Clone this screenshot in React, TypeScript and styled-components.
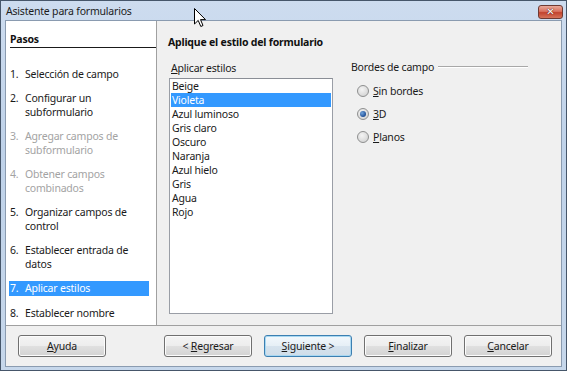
import React from "react";
import styled, { createGlobalStyle } from "styled-components";

const Global = createGlobalStyle`
  html, body { margin: 0; padding: 0; background: #c4d6ea; }
  body { font-family: "Noto Sans", "Open Sans", sans-serif; font-size: 10.5px; letter-spacing: -0.2px; color: #1a1a1a; }
  * { box-sizing: border-box; }
`;

const Window = styled.div`
  position: relative;
  width: 567px;
  height: 371px;
  border: 1px solid #46566a;
  background: linear-gradient(180deg, #cddcef 0%, #bfd2e9 40%, #c6d7eb 100%);
  padding: 0 4px 3px 4px;
  display: flex;
  flex-direction: column;
`;

const TitleBar = styled.div`
  height: 19px;
  display: flex;
  align-items: center;
  justify-content: space-between;
  padding-left: 1px;
`;

const TitleText = styled.span`
  font-size: 10.5px;
  color: #1b1b1b;
  line-height: 20px;
  padding-top: 1px;
`;

const CloseButton = styled.div`
  width: 25px;
  height: 14px;
  margin-top: 3px;
  margin-right: -1px;
  border: 1px solid #6e3a33;
  border-radius: 3px;
  background: linear-gradient(180deg, #e9a99b 0%, #d8715f 45%, #c2432e 55%, #d6735a 100%);
  display: flex;
  align-items: center;
  justify-content: center;
  color: #fff;
  font-family: "DejaVu Sans", sans-serif;
  font-weight: bold;
  font-size: 10px;
  line-height: 1;
  letter-spacing: 0;
  text-shadow: 0 0 1px #5a1c12, 0 0 1px #5a1c12;
`;

const Client = styled.div`
  flex: 1;
  background: #f0f0f0;
  border: 1px solid #8a9bb0;
  display: flex;
  flex-direction: column;
`;

const Main = styled.div`
  height: 304px;
  display: flex;
`;

const StepsPanel = styled.div`
  width: 151px;
  background: #fff;
  border-right: 1px solid #a0a0a0;
  padding: 12px 0 0 4px;
  display: flex;
  flex-direction: column;
`;

const StepsHeader = styled.div`
  font-weight: bold;
  line-height: 13px;
  border-bottom: 1px solid #1a1a1a;
  padding-bottom: 1px;
  color: #111;
`;

const StepList = styled.div`
  margin: 19px 7px 0 -1px;
  display: flex;
  flex-direction: column;
  gap: 10px;
`;

const Step = styled.div<{ $state?: "active" | "disabled" }>`
  display: grid;
  grid-template-columns: 15px 1fr;
  padding-left: 1px;
  line-height: 14px;
  color: ${(p) => (p.$state === "disabled" ? "#a3a3a3" : p.$state === "active" ? "#fff" : "#1a1a1a")};
  background: ${(p) => (p.$state === "active" ? "#3399ff" : "transparent")};
  height: ${(p) => (p.$state === "active" ? "15px" : "auto")};
`;

const Content = styled.div`
  flex: 1;
  padding: 14px 0 0 11px;
  display: flex;
  flex-direction: column;
`;

const PageTitle = styled.div`
  font-weight: bold;
  line-height: 14px;
  color: #111;
`;

const Columns = styled.div`
  display: flex;
  margin-top: 12px;
`;

const ListColumn = styled.div`
  width: 164px;
  margin-left: 1px;
  display: flex;
  flex-direction: column;
`;

const FieldLabel = styled.div`
  line-height: 14px;
  padding-left: 2px;
`;

const U = styled.span`
  text-decoration: underline;
`;

const ListBox = styled.div`
  margin-top: 3px;
  height: 236px;
  background: #fff;
  border: 1px solid #9a9ea6;
  border-top-color: #8a8e96;
  padding: 0 1px;
`;

const ListItem = styled.div<{ $selected?: boolean }>`
  line-height: 14px;
  padding-left: 1px;
  color: ${(p) => (p.$selected ? "#fff" : "#1a1a1a")};
  background: ${(p) => (p.$selected ? "#3399ff" : "transparent")};
`;

const BorderColumn = styled.div`
  margin-left: 18px;
  width: 177px;
  display: flex;
  flex-direction: column;
`;

const GroupHeader = styled.div`
  display: flex;
  align-items: center;
  gap: 4px;
  line-height: 14px;
  margin-top: -1px;
`;

const GroupLine = styled.div`
  flex: 1;
  height: 1px;
  background: #a8a8a8;
  border-bottom: 1px solid #fff;
  box-sizing: content-box;
`;

const RadioList = styled.div`
  display: flex;
  flex-direction: column;
  gap: 9px;
  margin-top: 10px;
  padding-left: 6px;
`;

const RadioRow = styled.label`
  display: flex;
  align-items: center;
  gap: 4px;
  line-height: 14px;
`;

const RadioCircle = styled.span<{ $checked?: boolean }>`
  width: 12px;
  height: 12px;
  border-radius: 50%;
  border: 1px solid #8e8f8f;
  background: radial-gradient(circle at 40% 35%, #f4f4f4 0%, #dcdcdc 60%, #cfcfcf 100%);
  display: flex;
  align-items: center;
  justify-content: center;
  &::after {
    content: "";
    display: ${(p) => (p.$checked ? "block" : "none")};
    width: 6px;
    height: 6px;
    border-radius: 50%;
    background: radial-gradient(circle at 35% 35%, #6fa3dc 0%, #1f4f96 70%, #163a70 100%);
  }
`;

const Footer = styled.div`
  flex: 1;
  border-top: 1px solid #a0a0a0;
  display: flex;
  align-items: flex-start;
  padding: 9px 9px 0 12px;
`;

const Spacer = styled.div`
  flex: 1;
`;

const ButtonGroup = styled.div`
  display: flex;
  gap: 12px;
`;

const Button = styled.button<{ $focused?: boolean }>`
  width: 88px;
  height: 22px;
  font-family: inherit;
  font-size: 10.5px;
  letter-spacing: -0.2px;
  color: #1a1a1a;
  border-radius: 3px;
  border: 1px solid ${(p) => (p.$focused ? "#3c7fb1" : "#707070")};
  background: ${(p) =>
    p.$focused
      ? "linear-gradient(180deg, #f2f8fc 0%, #e6eff6 50%, #d6e3ee 51%, #cfdde9 100%)"
      : "linear-gradient(180deg, #f4f4f4 0%, #ededed 50%, #e0e0e0 51%, #d3d3d3 100%)"};
  box-shadow: inset 0 0 0 1px ${(p) => (p.$focused ? "#a8d8f2" : "#fcfcfc")};
  padding: 0;
  line-height: 20px;
`;

const Cursor = styled.svg`
  position: absolute;
  left: 193px;
  top: 7px;
`;

const steps: { n: string; text: string; state?: "active" | "disabled" }[] = [
  { n: "1.", text: "Selección de campo" },
  { n: "2.", text: "Configurar un subformulario" },
  { n: "3.", text: "Agregar campos de subformulario", state: "disabled" },
  { n: "4.", text: "Obtener campos combinados", state: "disabled" },
  { n: "5.", text: "Organizar campos de control" },
  { n: "6.", text: "Establecer entrada de datos" },
  { n: "7.", text: "Aplicar estilos", state: "active" },
  { n: "8.", text: "Establecer nombre" },
];

const styles = ["Beige", "Violeta", "Azul luminoso", "Gris claro", "Oscuro", "Naranja", "Azul hielo", "Gris", "Agua", "Rojo"];

export default function App() {
  return (
    <>
      <Global />
      <Window>
        <TitleBar>
          <TitleText>Asistente para formularios</TitleText>
          <CloseButton>✕</CloseButton>
        </TitleBar>
        <Client>
          <Main>
            <StepsPanel>
              <StepsHeader>Pasos</StepsHeader>
              <StepList>
                {steps.map((s) => (
                  <Step key={s.n} $state={s.state}>
                    <span>{s.n}</span>
                    <span>{s.text}</span>
                  </Step>
                ))}
              </StepList>
            </StepsPanel>
            <Content>
              <PageTitle>Aplique el estilo del formulario</PageTitle>
              <Columns>
                <ListColumn>
                  <FieldLabel>
                    <U>A</U>plicar estilos
                  </FieldLabel>
                  <ListBox>
                    {styles.map((s) => (
                      <ListItem key={s} $selected={s === "Violeta"}>
                        {s}
                      </ListItem>
                    ))}
                  </ListBox>
                </ListColumn>
                <BorderColumn>
                  <GroupHeader>
                    <span>Bordes de campo</span>
                    <GroupLine />
                  </GroupHeader>
                  <RadioList>
                    <RadioRow>
                      <RadioCircle />
                      <span>
                        <U>S</U>in bordes
                      </span>
                    </RadioRow>
                    <RadioRow>
                      <RadioCircle $checked />
                      <span>
                        <U>3</U>D
                      </span>
                    </RadioRow>
                    <RadioRow>
                      <RadioCircle />
                      <span>
                        <U>P</U>lanos
                      </span>
                    </RadioRow>
                  </RadioList>
                </BorderColumn>
              </Columns>
            </Content>
          </Main>
          <Footer>
            <Button>
              <U>A</U>yuda
            </Button>
            <Spacer />
            <ButtonGroup>
              <Button>
                &lt; <U>R</U>egresar
              </Button>
              <Button $focused>
                <U>S</U>iguiente &gt;
              </Button>
              <Button>
                <U>F</U>inalizar
              </Button>
              <Button>
                <U>C</U>ancelar
              </Button>
            </ButtonGroup>
          </Footer>
        </Client>
        <Cursor width="13" height="20" viewBox="0 0 13 20">
          <path d="M0.5 0.5 L0.5 16 L4.2 12.4 L6.8 18.5 L9 17.5 L6.5 11.6 L11.5 11.6 Z" fill="#fff" stroke="#000" strokeWidth="1" strokeLinejoin="miter" />
        </Cursor>
      </Window>
    </>
  );
}
